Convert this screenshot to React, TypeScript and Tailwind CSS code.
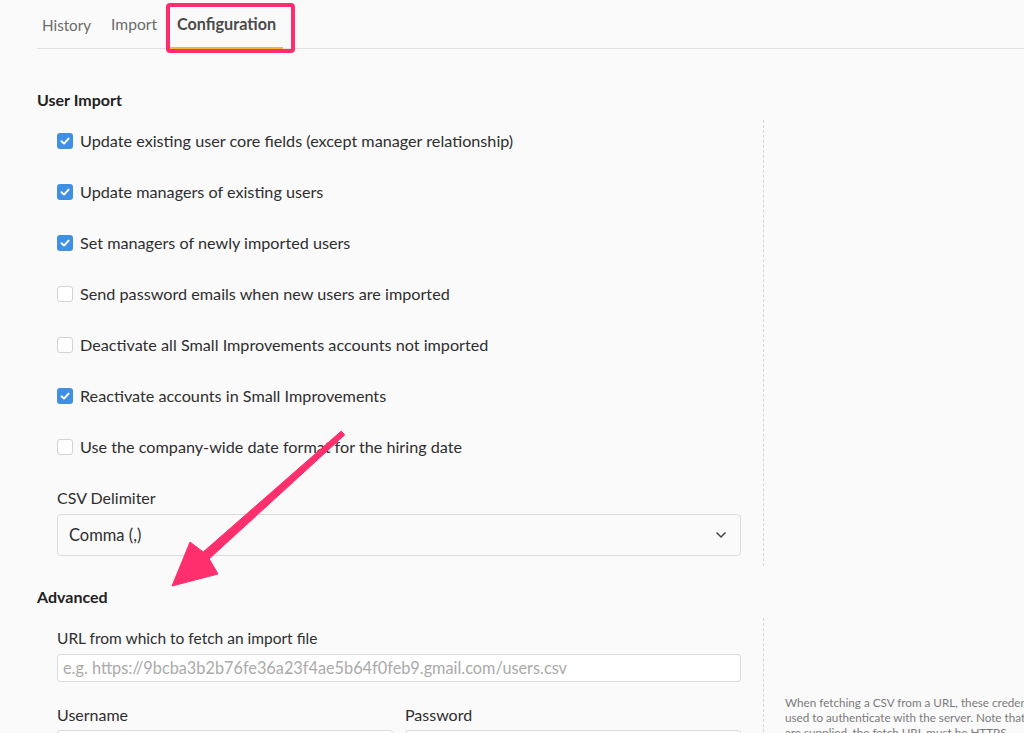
import React from "react";

const font = { fontFamily: "Lato, 'Noto Sans', sans-serif" };

function Check({ checked, label }: { checked: boolean; label: string }) {
  return (
    <div className="flex items-center h-[22px]">
      {checked ? (
        <div className="w-[16px] h-[16px] rounded-[3px] bg-[#3f8fe3] flex items-center justify-center shrink-0">
          <svg width="12" height="12" viewBox="0 0 12 12">
            <path d="M2.5 6.2 L5 8.6 L9.6 3.6" fill="none" stroke="white" strokeWidth="1.9" strokeLinecap="round" strokeLinejoin="round" />
          </svg>
        </div>
      ) : (
        <div className="w-[16px] h-[16px] rounded-[3px] bg-white border border-[#d3d3d3] shrink-0" />
      )}
      <span className="ml-[7px] text-[16.2px] text-[#2e2e2e] whitespace-nowrap">{label}</span>
    </div>
  );
}

export default function App() {
  const items: [boolean, string][] = [
    [true, "Update existing user core fields (except manager relationship)"],
    [true, "Update managers of existing users"],
    [true, "Set managers of newly imported users"],
    [false, "Send password emails when new users are imported"],
    [false, "Deactivate all Small Improvements accounts not imported"],
    [true, "Reactivate accounts in Small Improvements"],
    [false, "Use the company-wide date format for the hiring date"],
  ];
  return (
    <div className="relative w-[1024px] h-[733px] overflow-hidden bg-[#fafafa] text-[#333]" style={font}>
      {/* Tabs */}
      <div className="ml-[37px] h-[49px] border-b border-[#e2e2e2] flex items-end">
        <div className="flex gap-[6px] -ml-[2px] h-full">
          <div className="px-[7px] flex items-center text-[15.2px] text-[#6b6b6b] pt-[2px]">History</div>
          <div className="px-[7px] flex items-center text-[15.6px] text-[#6b6b6b] pt-[2px]">Import</div>
          <div className="px-[7px] flex items-center text-[16.2px] font-bold text-[#4a4a4a] pt-[2px] border-b-2 border-[#f5b731] -mb-px">Configuration</div>
        </div>
      </div>
      <div className="absolute left-[166px] top-[3px] w-[129px] h-[50px] border-[4px] border-[#ff2d6d] rounded-[4px]" />

      {/* User Import */}
      <div className="pl-[37px] pt-[40px]">
        <div className="h-[22px] leading-[22px] text-[16px] font-bold text-[#222]">User Import</div>
        <div className="flex mt-[9px]">
          <div className="w-[726px] shrink-0 pl-[20px] pr-[22px] pt-[10px] pb-[10px]">
            <div className="flex flex-col gap-[29px]">
              {items.map(([c, l], i) => (
                <Check key={i} checked={c} label={l} />
              ))}
            </div>
            <div className="mt-[29px] h-[22px] leading-[22px] text-[16px] text-[#2e2e2e]">CSV Delimiter</div>
            <div className="mt-[5px] h-[42px] border border-[#dcdcdc] rounded-[4px] bg-[#fafafa] flex items-center justify-between pl-[11px] pr-[13px]">
              <span className="text-[16.5px] text-[#2e2e2e]">Comma (,)</span>
              <svg width="12" height="8" viewBox="0 0 12 8">
                <path d="M1.5 1.5 L6 6 L10.5 1.5" fill="none" stroke="#444" strokeWidth="1.5" />
              </svg>
            </div>
          </div>
          <div className="border-l border-dashed border-[#d6d6d6] flex-1" />
        </div>

        {/* Advanced */}
        <div className="mt-[20px] h-[22px] leading-[22px] text-[16px] font-bold text-[#222]">Advanced</div>
        <div className="flex mt-[10px] h-[200px]">
          <div className="w-[726px] shrink-0 pl-[20px] pr-[22px] pt-[9px]">
            <div className="h-[22px] leading-[22px] text-[15.5px] text-[#2e2e2e]">URL from which to fetch an import file</div>
            <div className="mt-[5px] h-[28px] border border-[#dcdcdc] rounded-[3px] bg-white flex items-center pl-[5px]">
              <span className="text-[16.3px] text-[#aaaaaa] whitespace-nowrap">e.g. https://9bcba3b2b76fe36a23f4ae5b64f0feb9.gmail.com/users.csv</span>
            </div>
            <div className="mt-[22px] grid grid-cols-2 gap-[12px]">
              <div>
                <div className="h-[22px] leading-[22px] text-[16px] text-[#2e2e2e]">Username</div>
                <div className="mt-[4px] h-[28px] border border-[#dcdcdc] rounded-[3px] bg-white" />
              </div>
              <div>
                <div className="h-[22px] leading-[22px] text-[16px] text-[#2e2e2e]">Password</div>
                <div className="mt-[4px] h-[28px] border border-[#dcdcdc] rounded-[3px] bg-white" />
              </div>
            </div>
          </div>
          <div className="border-l border-dashed border-[#d6d6d6] pl-[21px] pt-[77px] w-[320px] shrink-0">
            <div className="text-[11.7px] leading-[15px] text-[#7a7a7a] whitespace-nowrap">
              <div>When fetching a CSV from a URL, these credentials will be</div>
              <div>used to authenticate with the server. Note that if credentials</div>
              <div>are supplied, the fetch URL must be HTTPS.</div>
            </div>
          </div>
        </div>
      </div>

      {/* Annotation arrow */}
      <svg className="absolute left-0 top-0 pointer-events-none" width="1024" height="733" viewBox="0 0 1024 733">
        <polygon
          points="341.3,431.1 203.2,552.0 190,542 172,586 218,574 209.2,558.8 344.7,434.9"
          fill="#fe2f6c"
          stroke="#fe2f6c"
          strokeWidth="1"
          strokeLinejoin="round"
        />
      </svg>
    </div>
  );
}
